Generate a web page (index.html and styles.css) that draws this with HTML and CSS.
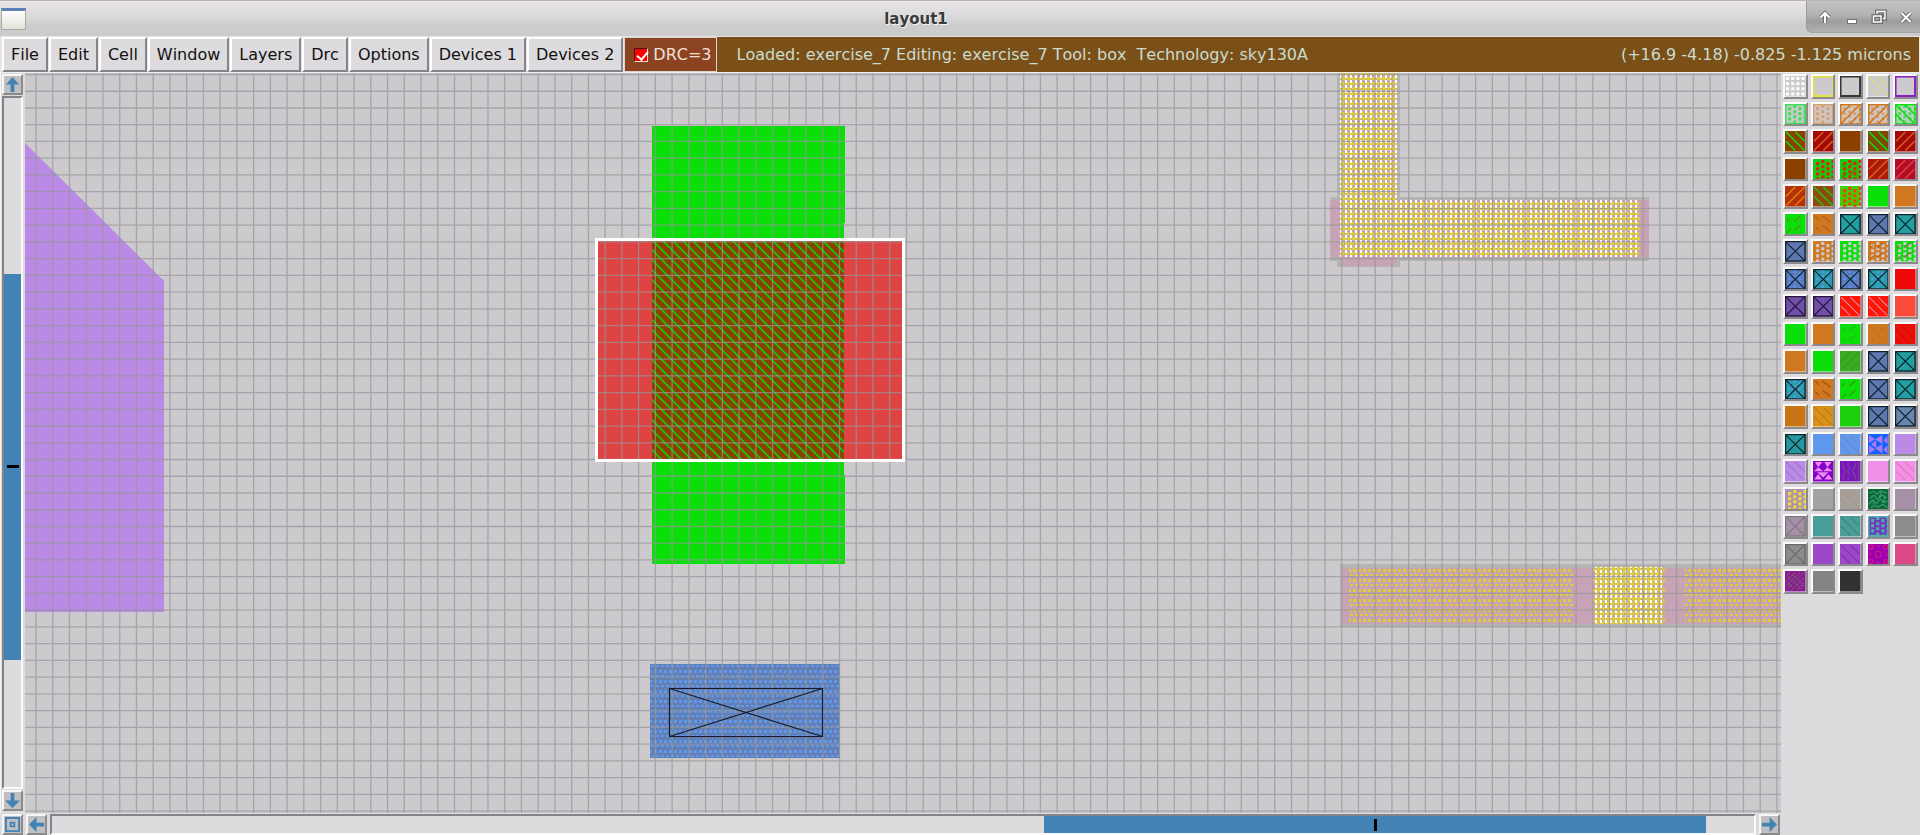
FILE: index.html
```html
<!DOCTYPE html>
<html lang="en">
<head>
<meta charset="utf-8">
<title>layout1</title>
<link rel="stylesheet" href="styles.css">
</head>
<body>
<header class="titlebar">
  <span class="app-icon"></span>
  <h1 class="title">layout1</h1>
  <div class="window-controls">
    <button class="wc" aria-label="Shade"><svg viewBox="0 0 16 16"><path class="edge" d="M8 14V5M3.5 8.5 8 4l4.5 4.5"/><path class="ink" d="M8 14V5M3.5 8.5 8 4l4.5 4.5"/></svg></button>
    <button class="wc" aria-label="Minimize"><svg viewBox="0 0 16 16"><rect class="box" x="3.500" y="10.500" width="9" height="4"/></svg></button>
    <button class="wc" aria-label="Restore"><svg viewBox="0 0 16 16"><path class="edge" d="M6 4.500V2.500h8v7h-2M2.500 7h7.500v6H2.500z"/><path class="ink thin" d="M6 4.500V2.500h8v7h-2M2.500 7h7.500v6H2.500z"/></svg></button>
    <button class="wc" aria-label="Close"><svg viewBox="0 0 16 16"><path class="edge" d="M3.500 4l9 9M12.500 4l-9 9"/><path class="ink" d="M3.500 4l9 9M12.500 4l-9 9"/></svg></button>
  </div>
</header>

<nav class="menubar">
  <button class="menu">File</button>
  <button class="menu">Edit</button>
  <button class="menu">Cell</button>
  <button class="menu">Window</button>
  <button class="menu">Layers</button>
  <button class="menu">Drc</button>
  <button class="menu">Options</button>
  <button class="menu">Devices 1</button>
  <button class="menu">Devices 2</button>
  <label class="drc"><input class="drc-check" type="checkbox" checked>DRC=3</label>
  <div class="status">
    <span class="status-text">Loaded: exercise_7 Editing: exercise_7 Tool: box  Technology: sky130A</span>
    <span class="status-text">(+16.9 -4.18) -0.825 -1.125 microns</span>
  </div>
</nav>

<main class="workspace">
  <div class="vscroll">
    <button class="arrow" aria-label="Scroll up"><svg viewBox="0 0 16 16"><path d="M8 0l7 8h-5v8H6V8H1z"/></svg></button>
    <div class="trough trough-v"><div class="thumb thumb-v"><span class="mark mark-v"></span></div></div>
    <button class="arrow" aria-label="Scroll down"><svg viewBox="0 0 16 16"><path d="M8 16l8-8h-6V0H6v8H0z"/></svg></button>
  </div>

  <svg class="canvas" role="img" aria-label="Layout view">
    <defs>
      <pattern id="hatch" width="10" height="10" x="4" y="2" patternUnits="userSpaceOnUse"><path d="M-1-1l12 12M-1 9l2 2M9-1l2 2" stroke="#14cc06" stroke-width="1.600"/></pattern>
      <pattern id="dots" width="5" height="10" x="0" y="4" patternUnits="userSpaceOnUse"><path d="M0 0h3v2H0zM0 5h1v3H0zM3 5h2v3H3z" fill="#ddce38"/></pattern>
      <pattern id="bluedots" width="5" height="10" x="1" y="4" patternUnits="userSpaceOnUse"><path d="M0 1h3v2H0zM0 6h1v3H0zM3 6h2v3H3z" fill="#5f98ee"/></pattern>
      <pattern id="mesh" width="5" height="10" x="0" y="0" patternUnits="userSpaceOnUse"><path d="M0 2h4v3H0zM2 7h3v3H2zM0 7h1v3H0z" fill="#ddd02e"/><path d="M0 0h2v3H0zM0 5h2v3H0z" fill="#fff"/></pattern>
    </defs>
    <g transform="translate(-25 -73)">
      <path fill="#bb8ae6" d="M25 143l139 138v331H25z"/>
      <path fill="#0adf0a" d="M652 126h193v97h-1v252h1v89H652z"/>
      <path fill="#df4444" d="M597 241h305v219H597z"/>
      <path fill="#8b4000" d="M652 241h192v219H652z"/>
      <path fill="url(#hatch)" d="M652 241h192v219H652z"/>
      <path fill="#617fb2" d="M650 664h190v94H650z"/>
      <path fill="url(#bluedots)" d="M650 664h190v94H650z"/>
      <path fill="#b4b4b3" d="M1337 60h63v137h249v64h-249v6h-63v-6h-7v-64h7z"/>
      <path fill="#c8a3b5" d="M1340 60h56v140h253v57h-253v9h-56v-9h-10v-57h10z"/>
      <path fill="url(#mesh)" d="M1340 60h57v140h243v57h-300z"/>
      <path fill="#b4b4b3" d="M1340 564h460v63h-460z"/>
      <path fill="#c8a3b5" d="M1341 568h459v56h-459z"/>
      <path fill="url(#dots)" d="M1349 569h224v55h-224zM1685 569h115v55h-115zM1593 569h72v55h-72z"/>
      <path fill="url(#mesh)" d="M1595 567h68v57h-68z"/>
      <g id="grid" class="grid"></g>
      <path fill="none" stroke="#fff" stroke-width="3" d="M596.500 239.500h307v221H596.500z"/>
      <path fill="none" stroke="#151c28" stroke-width="1.200" d="M669.500 688.500h153v48h-153zl153 48M822.500 688.500l-153 48"/>
    </g>
  </svg>

  <aside class="palette" id="palette" aria-label="Layers"></aside>

  <div class="hscroll">
    <button class="arrow" aria-label="Zoom to fit"><svg viewBox="0 0 16 16"><path fill-rule="evenodd" d="M0 0h16v16H0zM2 2v12h12V2zM5 5h6v6H5zM7 7v2h2V7z"/></svg></button>
    <button class="arrow" aria-label="Scroll left"><svg viewBox="0 0 16 16"><path d="M0 8l8-8v6h8v4H8v6z"/></svg></button>
    <div class="trough trough-h"><div class="thumb thumb-h"><span class="mark mark-h"></span></div></div>
    <button class="arrow" aria-label="Scroll right"><svg viewBox="0 0 16 16"><path d="M16 8l-8-8v6H0v4h8v6z"/></svg></button>
  </div>
</main>
<script src="app.js"></script>
</body>
</html>
```

FILE: styles.css
```css
* { box-sizing: border-box; }

body {
  margin: 0;
  height: 100vh;
  display: flex;
  flex-direction: column;
  overflow: hidden;
  background: #dddbde;
  color: #111;
  font: 16px/20px "DejaVu Sans", sans-serif;
  font-kerning: none;
}

button { font: inherit; color: inherit; margin: 0; padding: 0; }
svg { display: block; }

.titlebar {
  flex: none;
  height: 36px;
  display: flex;
  align-items: center;
  border-top: 1px solid #b9b6b8;
  background: linear-gradient(#ebe6e8, #d9d8da 45%, #cccccc 70%, #cccccc);
}
.app-icon {
  width: 25px;
  height: 22px;
  margin-left: 1px;
  border: 1px solid #a9a9a6;
  border-top: 3px solid #5a80b5;
  background: linear-gradient(#fff, #e0e2d8);
}
.title {
  flex: 1;
  margin: 0;
  text-align: center;
  font-size: 15px;
  line-height: 20px;
  color: #3a3a3a;
  text-shadow: 1px 1px 0 #f5f5f5;
}
.window-controls {
  align-self: start;
  display: flex;
  gap: 11px;
  height: 32px;
  padding: 0 6px 0 10px;
  align-items: center;
  border-left: 1px solid #9a9a9a;
  border-bottom: 1px solid #a5a5a5;
  border-bottom-left-radius: 6px;
  background: linear-gradient(#c4c2c3, #b3b3b3 45%, #9c9c9c 65%, #b2b2b2);
}
.wc { width: 16px; height: 16px; border: 0; background: none; }
.wc svg { width: 16px; height: 16px; }
.edge { fill: none; stroke: #6f6f6f; stroke-width: 4; }
.ink { fill: none; stroke: #fff; stroke-width: 2; }
.thin { stroke-width: 1.500; }
.box { fill: #fff; stroke: #6f6f6f; }

.menubar {
  flex: none;
  display: flex;
  gap: 1px;
  height: 37px;
  padding: 1px 1px 0 2px;
  border-bottom: 1px solid #eee;
  background: #e6e4e6;
}
.menu {
  padding: 0 7px;
  border: 2px solid;
  border-color: #fff #858387 #858387 #fff;
  background: #dddbde;
}
.drc {
  display: flex;
  align-items: center;
  gap: 5px;
  padding: 0 4px 0 9px;
  border: 1px solid #ddd5d0;
  background: #8b4322;
  color: #f0e0d8;
}
.drc-check {
  appearance: none;
  width: 14px;
  height: 14px;
  margin: 0;
  border: 1px solid;
  border-color: #511 #edd #edd #511;
  background: #f00;
}
.drc-check:checked::before {
  content: "";
  display: block;
  width: 5px;
  height: 9px;
  margin: 0 0 0 4px;
  border: solid #fff;
  border-width: 0 2px 2px 0;
  transform: rotate(40deg);
}
.status {
  flex: 1;
  display: flex;
  justify-content: space-between;
  align-items: center;
  margin-left: -1px;
  padding: 0 8px 0 20px;
  background: #7b5018;
  color: #c9dcd0;
}
.status-text { white-space: pre; }

.workspace {
  flex: 1;
  min-height: 0;
  display: grid;
  grid-template: minmax(0, 1fr) 22px / 25px minmax(0, 1fr) 139px;
}
.vscroll {
  display: flex;
  flex-direction: column;
  gap: 1px;
  padding: 1px 1px 2px;
  border-left: 1px solid #f6f6f6;
}
.canvas { width: 100%; height: 100%; background: #cccacd; }
.grid { stroke: #97959a; stroke-opacity: .72; stroke-width: 1.300; }

.hscroll {
  grid-column: 1 / 3;
  grid-row: 2;
  display: flex;
  gap: 3px;
  padding: 1px 1px 0 2px;
}
.arrow {
  flex: none;
  width: 21px;
  height: 21px;
  padding: 1px;
  border: 2px solid;
  border-color: #f6f6f6 #8b898c #8b898c #f6f6f6;
  background: #c0bfc1;
}
.arrow svg { width: 100%; height: 100%; fill: #4382b5; }
.trough {
  flex: 1;
  display: flex;
  border: 2px solid;
  border-color: #858387 #fafafa #fafafa #858387;
  background: #dddbde;
}
.trough-v { width: 21px; flex-direction: column; }
.thumb {
  display: flex;
  align-items: center;
  justify-content: center;
  background: #4382b5;
}
.trough-v::before { content: ""; height: 25.500%; }
.thumb-v { height: 56%; }
.trough-h::before { content: ""; width: 58.300%; }
.thumb-h { width: 38.900%; }
.mark { background: #000; }
.mark-v { width: 12px; height: 3px; }
.mark-h { width: 3px; height: 12px; }

.palette {
  grid-column: 3;
  grid-row: 1 / 3;
  align-self: start;
  height: 521px;
  display: grid;
  grid-template: repeat(19, minmax(0, 1fr)) / repeat(5, minmax(0, 1fr));
  gap: 3px;
  padding: 1px 2px 0;
}
.swatch {
  border: 2px solid;
  border-color: #fafafa #8b898c #8b898c #fafafa;
  background: #fafafa;
}
.swatch svg { width: 100%; height: 100%; }
```

FILE: app.js
```js
const NS = 'http://www.w3.org/2000/svg';

// Grid lines of the layout view, in layout pixels.
const PITCH = 16.74;
const grid = document.getElementById('grid');
let d = '';
for (let i = 0; i < 240; i++) {
  d += `M${(36 + i * PITCH).toFixed(2)} 60V2400`;
  d += `M0 ${(74.5 + i * PITCH).toFixed(2)}H4000`;
}
const lines = document.createElementNS(NS, 'path');
lines.setAttribute('d', d);
grid.append(lines);

// Stipple painters; every swatch is drawn on a 20 x 20 tile.
const line = (c, w, path) => `<path d="${path}" fill="none" stroke="${c}" stroke-width="${w}"/>`;
const frame = (c, w) => `<rect x=".5" y=".5" width="19" height="19" fill="none" stroke="${c}" stroke-width="${w}"/>`;
const paint = {
  outline: c => frame(c, 2),
  grid: c => {
    let p = '';
    for (let y = 1; y < 20; y += 5) for (let x = 1; x < 18; x += 5) p += `M${x} ${y}h3v3h-3z`;
    return `<path d="${p}" fill="${c}"/>`;
  },
  dots: c => {
    let p = '';
    for (let x = 3, k = 0; x < 20; x += 5, k++) for (let y = k % 2 ? 1 : 3; y < 19; y += 5) p += `M${x} ${y}h3v3h-3z`;
    return `<path d="${p}" fill="${c}"/>`;
  },
  back: c => line(c, 1.5, 'M1 1l18 18M1 10l9 9M10 1l9 9'),
  fwd: c => line(c, 1.5, 'M1 19l18-18M1 10l9-9M10 19l9-9'),
  thin: c => line(c, 1, 'M1 1l18 18M1 10l9 9M10 1l9 9'),
  dashf: c => line(c, 1.2, 'M2 7l3-3M9 7l6-5M2 18l4-4M9 16l6-5'),
  dashb: c => line(c, 1.2, 'M2 2l4 4M9 2l8 6M2 12l4 4M9 11l8 6'),
  x: c => line(c, 1.1, 'M1 1l18 18M19 1L1 19') + frame(c, 1.4),
  bow: c => `<path fill="${c}" d="M1 1l6 4-6 4zM1 11l6 4-6 4zM14 1v9L7 5zM14 10v9l-7-5zM8 6v8l-5-4zM19 2v8l-4-4zM19 11v8l-4-4z"/>`,
  tri: c => `<path fill="${c}" d="M2 1h7L5 6zM11 1h7l-4 5zM1 10l4-4 5 4zM10 10l4-4 5 4zM4 11h11l-5 5zM1 18l4-5 4 5zM11 18l4-5 4 5z"/>`,
  rings: c => `<g fill="none" stroke="${c}" stroke-width="1.5"><circle cx="10" cy="10" r="3"/><circle cx="3" cy="3" r="2"/><circle cx="17" cy="3" r="2"/><circle cx="3" cy="17" r="2"/><circle cx="17" cy="17" r="2"/><path d="M8 2h4M8 18h4M2 8v4M18 8v4"/></g>`,
  bars: c => line(c, 1.5, 'M3 1v4l2 5-2 5v4M8 1v4M8 15v4M10 6l-3 4 3 4M15 1v4l-3 5 3 5v4M18 1v18'),
  maze: c => line(c, 1, 'M1 4l4-2 4 3 3-3 6 2M2 9l4-3 3 4 5-4 4 3M1 15l3-4 4 3 4-4 3 3 4-1M3 18l4-2 3 2 4-3 5 3M13 3l-2 5M6 10l-1 5M16 8l-1 5'),
  weave: c => line(c, 1, 'M1 5l4-4M1 10l9-9M1 15L15 1M1 19L19 1M6 19L19 6M11 19l8-8M2 4l14 14M7 3l12 12M2 11l7 7')
};

const BG = '#cccacd', G = '#0adf0a', O = '#d07820', BR = '#8b4000';
const T = '#20a0a0', B = '#6078b0', DR = '#a50808', K = '#10202c', P = '#bb8ae6', M = '#9b48c8';

const layers = [
  [BG, 'grid', '#fff'], [BG, 'outline', '#e8e23f'], [BG, 'outline', '#383838'], [BG, 'thin', '#e5dd65'], [BG, 'outline', '#8a1fbf'],
  [BG, 'outline', '#45dd5c', 'dots', '#45dd5c'], [BG, 'outline', '#d8a070', 'dots', '#d8a070'], [BG, 'outline', O, 'dots', '#d8a070', 'fwd', O], [BG, 'outline', O, 'dots', '#d8a070', 'fwd', O], [BG, 'outline', G, 'dots', '#45dd5c', 'back', G],
  [BR, 'back', G], [DR, 'fwd', '#cc6420'], [BR], ['#804808', 'back', G], [DR, 'fwd', '#cc6420'],
  [BR], ['#0fcf0f', 'dots', '#e82010'], ['#0fcf0f', 'dots', '#e82010', 'dashf', '#6a7008'], ['#ad180a', 'fwd', '#c86418'], ['#b80a28', 'fwd', '#cc4838'],
  ['#b83008', 'fwd', '#d88010'], ['#904a10', 'back', '#22c010'], ['#40d000', 'dots', '#f04010'], [G], [O],
  [G, 'dashf', '#5a9010'], [O, 'dashb', '#a86020'], [T, 'x', K], [B, 'x', K], [T, 'x', K],
  [B, 'x', K], [O, 'dots', BG], [G, 'dots', BG], [O, 'dots', BG, 'dashf', '#b86418'], [G, 'dots', BG, 'dashf', '#957050'],
  [B, 'dots', '#5090f0', 'x', K], [T, 'dots', '#5098e0', 'x', K], [B, 'dots', '#5090f0', 'x', K], [T, 'dots', '#5098e0', 'x', K], ['#f00808'],
  ['#7050a8', 'x', '#28143c'], ['#7050a8', 'x', '#28143c'], ['#ff1505', 'thin', '#d898b8'], ['#ff1505', 'thin', '#d898b8'], ['#f94a3a'],
  [G], [O], [G, 'dashf', '#28b820'], [O, 'dashb', '#bc7030'], ['#f00808', 'thin', '#b04010'],
  [O], [G], ['#3cab24', 'fwd', '#34a01e'], [B, 'x', K], [T, 'x', K],
  [T, 'dots', '#5098e0', 'x', K], [O, 'dashb', '#a85010'], [G, 'dashf', '#409010'], [B, 'x', K], [T, 'x', K],
  ['#c87515'], ['#d89018', 'thin', '#b87818'], ['#1cd00c'], [B, 'x', K], ['#6888b0', 'x', K],
  ['#2898a0', 'x', '#08282c'], ['#6098f0'], ['#6098f0', 'thin', '#7088b0'], ['#1060ff', 'bow', '#a87cf0'], [P],
  [P, 'thin', '#a070c0'], ['#8a00c8', 'tri', '#e88cf0'], ['#8010c0', 'bars', '#684890'], ['#f090e8'], ['#f090e8', 'thin', '#f070b0'],
  ['#b090b0', 'dots', '#eee030'], ['#a3a2a4'], ['#a3a0a0', 'thin', '#b89070'], ['#0a6a38', 'maze', '#40a080'], ['#a590a8'],
  ['#a590a8', 'x', '#7c787e'], ['#4a9e9a'], ['#4a9e9a', 'thin', '#408070'], ['#7038c0', 'outline', '#50b0a8', 'dots', '#50b0a8'], ['#8a8d8a'],
  ['#8a8d8a', 'x', '#686b68'], [M], [M, 'thin', '#8030a0'], ['#9800b8', 'rings', '#d01080'], ['#dc4888'],
  ['#8a1898', 'weave', '#805070'], ['#858386'], ['#303230']
];

const palette = document.getElementById('palette');
layers.forEach(([base, ...ops], i) => {
  let art = `<rect width="20" height="20" fill="${base}"/>`;
  for (let k = 0; k < ops.length; k += 2) art += paint[ops[k]](ops[k + 1]);
  const b = document.createElement('button');
  b.className = 'swatch';
  b.setAttribute('aria-label', `Layer ${i + 1}`);
  b.innerHTML = `<svg viewBox="0 0 20 20" preserveAspectRatio="none">${art}</svg>`;
  palette.append(b);
});
```
